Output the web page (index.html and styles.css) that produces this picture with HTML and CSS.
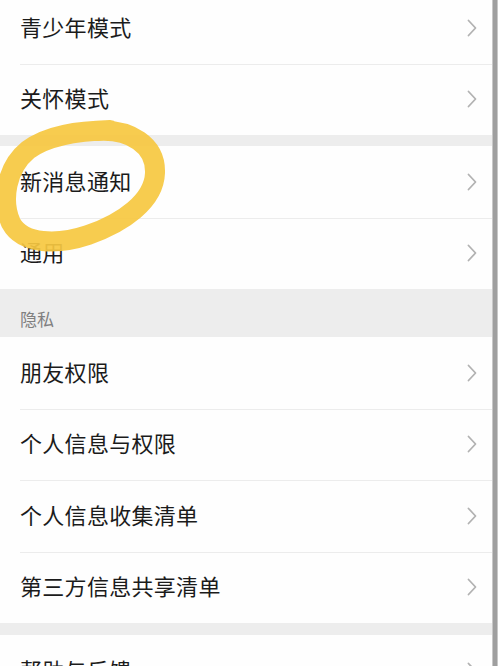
FILE: index.html
```html
<!DOCTYPE html>
<html lang="zh-CN">
<head>
<meta charset="utf-8">
<link rel="stylesheet" href="styles.css">
</head>
<body>
<div class="screen">
  <div class="content">
    <div class="list">
      <div class="group first">
        <div class="row"><span class="label">青少年模式</span><svg class="chev" viewBox="0 0 10 18"><polyline points="1.5,1.5 8.5,9 1.5,16.5"/></svg></div>
        <div class="row"><span class="label">关怀模式</span><svg class="chev" viewBox="0 0 10 18"><polyline points="1.5,1.5 8.5,9 1.5,16.5"/></svg></div>
      </div>
      <div class="gap"></div>
      <div class="group">
        <div class="row"><span class="label">新消息通知</span><svg class="chev" viewBox="0 0 10 18"><polyline points="1.5,1.5 8.5,9 1.5,16.5"/></svg></div>
        <div class="row"><span class="label">通用</span><svg class="chev" viewBox="0 0 10 18"><polyline points="1.5,1.5 8.5,9 1.5,16.5"/></svg></div>
      </div>
      <div class="header">隐私</div>
      <div class="group">
        <div class="row"><span class="label">朋友权限</span><svg class="chev" viewBox="0 0 10 18"><polyline points="1.5,1.5 8.5,9 1.5,16.5"/></svg></div>
        <div class="row"><span class="label">个人信息与权限</span><svg class="chev" viewBox="0 0 10 18"><polyline points="1.5,1.5 8.5,9 1.5,16.5"/></svg></div>
        <div class="row"><span class="label">个人信息收集清单</span><svg class="chev" viewBox="0 0 10 18"><polyline points="1.5,1.5 8.5,9 1.5,16.5"/></svg></div>
        <div class="row"><span class="label">第三方信息共享清单</span><svg class="chev" viewBox="0 0 10 18"><polyline points="1.5,1.5 8.5,9 1.5,16.5"/></svg></div>
      </div>
      <div class="gap gap-lg"></div>
      <div class="group">
        <div class="row"><span class="label">帮助与反馈</span><svg class="chev" viewBox="0 0 10 18"><polyline points="1.5,1.5 8.5,9 1.5,16.5"/></svg></div>
      </div>
    </div>
    <svg class="marker" viewBox="0 0 200 160" width="200" height="160">
      <path d="M100 28 C 132 26, 158 42, 157 70 C 156 98, 125 120, 90 132 C 60 142, 25 142, 13 120 C 3 98, 8 65, 30 47 C 50 32, 80 28, 112 27"/>
    </svg>
  </div>
  <div class="scrollbar"></div>
</div>
</body>
</html>
```
FILE: styles.css
```css
html, body {
  margin: 0;
  padding: 0;
  background: #ffffff;
}
body {
  font-family: "Noto Sans CJK SC", "Noto Sans", sans-serif;
  overflow: hidden;
}
.screen {
  display: flex;
  width: 500px;
  height: 666px;
  overflow: hidden;
}
.content {
  position: relative;
  width: 492px;
  background: #ededed;
  overflow: hidden;
}
.list {
  margin-top: -8px;
  display: flex;
  flex-direction: column;
}
.group {
  background: #fefefe;
}
.row {
  height: 71.5px;
  box-sizing: border-box;
  display: flex;
  align-items: center;
  justify-content: space-between;
  padding: 0 15px 0 20px;
  position: relative;
}
.row + .row::before {
  content: "";
  position: absolute;
  left: 20px;
  right: 0;
  top: 0;
  height: 1px;
  background: #ececec;
}
.label {
  font-size: 22px;
  color: #1b1b1b;
  letter-spacing: 0.3px;
  margin-bottom: 4px;
}
.chev {
  width: 10px;
  height: 18px;
  fill: none;
  stroke: #b2b2b2;
  stroke-width: 1.8;
  stroke-linecap: round;
  stroke-linejoin: round;
}
.gap {
  height: 11px;
  background: #ededed;
}
.gap-lg {
  height: 12px;
}
.header {
  height: 48px;
  box-sizing: border-box;
  padding: 17px 20px 0;
  font-size: 17px;
  color: #808080;
  background: #ededed;
}
.marker {
  position: absolute;
  left: -2px;
  top: 103px;
  fill: none;
  stroke: #f7c841;
  stroke-width: 20;
  stroke-linecap: round;
  opacity: 0.92;
}
.scrollbar {
  width: 4px;
  background: #9f9f9f;
  border-left: 1px solid #c8c8c8;
  border-right: 1px solid #c8c8c8;
  box-sizing: content-box;
}
```
